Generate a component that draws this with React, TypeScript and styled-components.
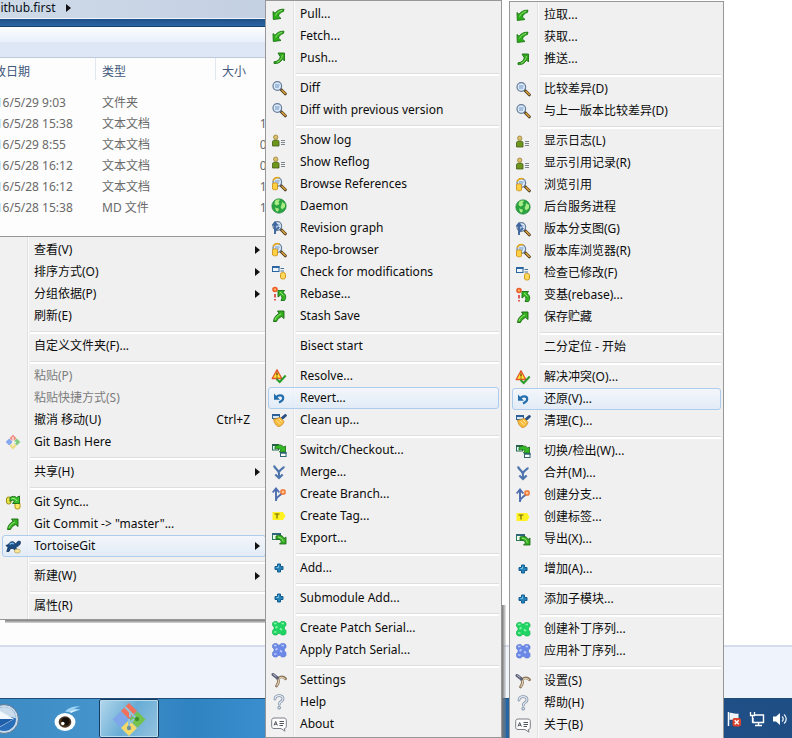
import React from "react";
import styled, { createGlobalStyle, css } from "styled-components";

const GlobalStyle = createGlobalStyle`
  * { box-sizing: border-box; }
  body { margin: 0; background: #fff; }
  body, button, table {
    font-family: "Noto Sans", "Noto Sans CJK SC", sans-serif;
    font-size: 12px;
    line-height: 16px;
  }
`;

const Desktop = styled.main`
  position: relative;
  display: flex;
  flex-direction: column;
  min-height: 100vh;
  max-height: 100vh;
  overflow: hidden;
`;

/* ---------- Explorer window ---------- */

const Explorer = styled.section`
  flex: 1;
  width: 40%;
  margin-left: -18px;
  overflow: hidden;
  background: #fdfdfd;
`;

const AddressBar = styled.nav`
  display: flex;
  align-items: flex-start;
  height: 18px;
  padding-left: 11px;
  background: linear-gradient(90deg, #cfdbe8, #c2cfe2);
`;

const Crumb = styled.button`
  display: flex;
  align-items: center;
  gap: 10px;
  height: 15px;
  padding: 0;
  border: 0;
  background: none;
  color: #0b0f18;
`;

const WindowEdge = styled.div`
  height: 9px;
  border-top: 1px solid #eef4fa;
  border-bottom: 1px solid #17406f;
  background: linear-gradient(#1f5088, #2a66a4);
`;

const CommandBar = styled.div`
  height: 31px;
  border-bottom: 1px solid #bfc9d8;
  background: linear-gradient(#fbfdff 0%, #eaf1fb 48%, #dee6f4 52%, #dde8f6 100%);
`;

const FileTable = styled.table`
  width: 309px;
  table-layout: fixed;
  border-collapse: separate;
  border-spacing: 0;
  color: #6a6a6a;

  tbody::before {
    content: "";
    display: block;
    height: 12px;
  }
`;

const HeadCell = styled.th<{ $width: number }>`
  width: ${(p) => p.$width}px;
  height: 22px;
  padding: 6px 0 0 6px;
  border-right: 1px solid #e2e6ee;
  color: #43587c;
  font-weight: 400;
  text-align: left;
  white-space: nowrap;

  &:first-child { padding-left: 0; }
`;

const Cell = styled.td`
  height: 21px;
  padding: 0 0 0 6px;
  white-space: nowrap;

  &:first-child { padding-left: 0; }
  &:last-child { padding-right: 6px; text-align: right; }
`;

const DetailsPane = styled.aside`
  height: 53px;
  border-top: 2px solid #d6dcec;
  background: #eff3fb;
`;

/* ---------- Taskbar ---------- */

const Taskbar = styled.footer`
  display: flex;
  align-items: stretch;
  justify-content: space-between;
  height: 40px;
  border-top: 1px solid #1f4d78;
  background: linear-gradient(90deg, #3c8bc4 0%, #4593cb 12%, #2f83c1 24%, #3b8fce 34%, #2a70ae 60%, #1e5087 72%, #1f4e85 100%);
`;

const TaskButtons = styled.div`
  display: flex;
  margin-left: -24px;
`;

const TaskButton = styled.button<{ $width: number; $active?: boolean }>`
  display: flex;
  align-items: center;
  justify-content: center;
  width: ${(p) => p.$width}px;
  padding: 0;
  border: 0;
  background: none;
  ${(p) =>
    p.$active &&
    css`
      border: 1px solid #d4e8f5;
      border-radius: 2px;
      outline: 1px solid #153b60;
      outline-offset: -1px;
      box-shadow: inset 0 0 0 1px #b9dbee;
      background: linear-gradient(120deg, #b4d8ec, #68acd5 50%, #94c3e0);
    `}
`;

const Tray = styled.div`
  display: flex;
  align-items: center;
  gap: 7px;
  padding-right: 4px;
`;

const TrayButton = styled.button`
  display: flex;
  padding: 0;
  border: 0;
  background: none;
`;

/* ---------- Context menus ---------- */

const MenuPanel = styled.div<{ $left: number; $top: number; $width: number; $shadow?: "right" | "bottom" }>`
  position: absolute;
  left: ${(p) => p.$left}px;
  top: ${(p) => p.$top}px;
  width: ${(p) => p.$width}px;

  ${(p) =>
    p.$shadow === "bottom" &&
    css`
      &::after {
        content: "";
        position: absolute;
        left: 6px;
        right: 0;
        top: 100%;
        height: 3px;
        background: linear-gradient(#7d7d7d, #d8d8d8);
      }
    `}
  ${(p) =>
    p.$shadow === "right" &&
    css`
      &::after {
        content: "";
        position: absolute;
        left: 100%;
        bottom: 0;
        width: 4px;
        height: 133px;
        background: linear-gradient(90deg, #777, rgba(150, 150, 150, 0.2));
      }
    `}
`;

const MenuList = styled.ul`
  margin: 0;
  padding: 2px;
  list-style: none;
  border: 1px solid #979797;
  background: linear-gradient(90deg, #f1f1f1 27px, #e1e1e1 27px, #e1e1e1 28px, #fcfcfc 28px, #fcfcfc 29px, #f0f0f0 29px);
`;

const MenuButton = styled.button<{ $highlight?: boolean }>`
  display: flex;
  align-items: center;
  width: 100%;
  height: 22px;
  padding: 0 15px 0 2px;
  border: 1px solid transparent;
  border-radius: 3px;
  background: none;
  color: #0c0c0c;
  text-align: left;
  white-space: nowrap;

  &:disabled { color: #7c7c7c; }

  ${(p) =>
    p.$highlight &&
    css`
      border-color: #aeccec;
      background: linear-gradient(rgba(244, 248, 253, 0.8), rgba(222, 234, 248, 0.8));
    `}
`;

const IconSlot = styled.span`
  display: flex;
  flex: none;
  width: 29px;
`;

const Label = styled.span`
  flex: 1;
`;

const SubmenuMark = styled.span`
  display: flex;
  width: 5px;
  margin-right: -10px;
`;

const Separator = styled.li`
  height: 8px;
  padding: 4px 0 0 28px;

  &::before {
    content: "";
    display: block;
    height: 2px;
    border-top: 1px solid #dedede;
    background: #fff;
  }
`;

/* ---------- Icons ---------- */

const Svg = ({ children, size = 16, box = 16 }: { children: React.ReactNode; size?: number; box?: number }) => (
  <svg width={size} height={size} viewBox={`0 0 ${box} ${box}`} aria-hidden="true">
    {children}
  </svg>
);

const Triangle = () => (
  <svg width="5" height="8" viewBox="0 0 5 8" aria-hidden="true">
    <path d="M0 0l5 4-5 4z" fill="#111" />
  </svg>
);

const Lens = () => (
  <>
    <path d="M10 9.500l4.300 4.300" stroke="#4b3a20" strokeWidth="3" strokeLinecap="round" />
    <path d="M11 10.300l3.200 3.200" stroke="#dba23a" strokeWidth="1.600" strokeLinecap="round" />
    <circle cx="6.300" cy="6" r="4.300" fill="#dceafa" stroke="#647c98" strokeWidth="1.200" />
    <path d="M4 5h4.600M4 7h4" stroke="#6f93c4" strokeWidth="1" />
  </>
);

const Patch = ({ fill, light, edge }: { fill: string; light: string; edge: string }) => (
  <Svg>
    <path
      d="M3 1.500h3L7 3h2l1-1.500h3.500L15 3v2.500L13.500 7v2l1.500 1.500v3L13.500 15h-3L9 13.500H7L6 15H3l-1.500-1.500v-3L3 9V7L1.500 5.500V3z"
      fill={fill}
      stroke={edge}
      strokeWidth=".6"
      strokeLinejoin="round"
    />
    <path d="M3 3.500h2.500M10.500 3.500H13M4.500 8l2-1.500M3 12h2.500M9 8.500l2 1.500" stroke={light} strokeWidth="1.600" />
  </Svg>
);

const icons: Record<string, React.ReactNode> = {
  pull: (
    <Svg>
      <path d="M2 5.500l2 1.800C6 4.500 9 3 13 3.200l-.6 2.300C10 6 8.300 7.500 7.400 10L10 12.500 2.300 13.500z" fill="#2fae1c" stroke="#18750f" strokeWidth=".9" strokeLinejoin="round" />
      <path d="M4.600 9.500C6 6.500 8 5 11 4.400" fill="none" stroke="#8fe070" />
    </Svg>
  ),
  push: (
    <Svg>
      <path d="M7 3h6.500v8L11.500 9c-1.500 3-4.500 5-8.500 4.500v-1.700c3.500-.3 5.500-2 6.300-5z" fill="#33a81f" stroke="#1b7312" strokeWidth=".9" strokeLinejoin="round" />
      <path d="M11.500 5c-.5 3.500-2.500 6-5.500 7.300" fill="none" stroke="#8bdc6c" />
    </Svg>
  ),
  commit: (
    <Svg>
      <path d="M6.500 3H13v7.500l-2.300-2C8.500 9.500 6.500 11 5.500 13.500h-3c.3-3.500 2.300-6.500 5.700-8.200z" fill="#35b01f" stroke="#17660f" strokeWidth=".9" strokeLinejoin="round" />
      <path d="M4 12c.7-2.800 2.800-4.800 6-6" fill="none" stroke="#98e878" />
    </Svg>
  ),
  diff: <Svg><Lens /></Svg>,
  browse: (
    <Svg>
      <Lens />
      <path d="M1.500 7.500c1.500-1 4-.8 5 .2v5.500c-1.500 1-4 .8-5-.2z" fill="#ffd044" stroke="#c98a12" strokeWidth=".8" />
      <path d="M2 4.500c1.500-2.500 4-3.500 6.500-2.500" fill="none" stroke="#e8a818" strokeWidth="1.500" />
    </Svg>
  ),
  graph: (
    <Svg>
      <Lens />
      <path d="M4 14V3M1.500 5.500L4 2.500l2.500 3M4 12c0-3 3-3 4-5" fill="none" stroke="#40689f" strokeWidth="1.900" />
    </Svg>
  ),
  log: (
    <Svg>
      <path d="M1.500 14V9.500c0-2 6.500-2 6.500 0V14z" fill="#6e961d" stroke="#435d17" strokeWidth=".8" />
      <circle cx="4.700" cy="5.200" r="2.200" fill="#dcc06c" stroke="#98803c" strokeWidth=".8" />
      <path d="M10 8.500h4M10 10.500h4M10 12.500h4" stroke="#7d868c" />
    </Svg>
  ),
  globe: (
    <Svg>
      <circle cx="8" cy="8" r="7.200" fill="#2aa341" stroke="#1c7f33" strokeWidth=".6" />
      <path d="M4 3c1.500-1.500 4-1.800 5-1.200L7.500 4 8.500 6 5.500 7.500 3.500 6zM11 4l3 2v3l-3 2.500-1.500-2.500 1-2zM4 9.500l4 1.200-1 3-2-1z" fill="#a9ec86" />
    </Svg>
  ),
  modifications: (
    <Svg>
      <rect x="1.500" y="2.500" width="6.500" height="5" fill="#edf5ff" stroke="#2b649e" />
      <path d="M1 3h7.500" stroke="#2b649e" strokeWidth="2" />
      <path d="M9.500 4.500H13M9.500 7H13" stroke="#47739b" />
      <rect x="9.500" y="8.500" width="5" height="6.500" rx="2" fill="#ffd95c" stroke="#d19a1f" />
    </Svg>
  ),
  rebase: (
    <Svg>
      <circle cx="4" cy="3.500" r="2" fill="#ffb15b" stroke="#ea5a2a" strokeWidth="1.600" />
      <path d="M4 8v3.500M4 13v1.500" stroke="#d32a2a" strokeWidth="1.500" />
      <path d="M7 4.500h6.500L12 6.500c3 2 3.500 5 1.500 8H10c1.500-2.500 1.200-4.500-.5-5.500L7 11z" fill="#35b526" stroke="#167113" strokeWidth=".9" />
      <path d="M9 6l3.500 3.500" stroke="#94ea78" />
    </Svg>
  ),
  resolve: (
    <Svg>
      <path d="M6 1.800l4.800 8.700H1.200z" fill="#ffe72f" stroke="#e2542c" strokeWidth="1.300" strokeLinejoin="round" />
      <path d="M6 4.500v3M6 8.500v1" stroke="#6d2f12" strokeWidth="1.300" />
      <path d="M5.500 11l3.200 3 6-6.500" fill="none" stroke="#2b9b29" strokeWidth="2" />
    </Svg>
  ),
  revert: (
    <Svg>
      <path d="M5.500 7c2-2.500 6.500-2.200 6.700.8.100 2-1.500 3.500-4.200 4.700" fill="none" stroke="#236fae" strokeWidth="2.200" />
      <path d="M3 3.500v6.300h6z" fill="#236fae" />
    </Svg>
  ),
  clean: (
    <Svg>
      <rect x="1.500" y="2.500" width="7" height="4" fill="#d6e7f8" stroke="#2e5f96" />
      <path d="M1 3h8" stroke="#2e5f96" strokeWidth="2" />
      <path d="M11.500 6l2.800-2.500" stroke="#294f80" strokeWidth="3" strokeLinecap="round" />
      <path d="M2.500 7c2.500.5 4.500-1.500 7-1.500l3.500 4c-1 3-3 5-6 5-2.500-1.500-4-4-4.500-7.500z" fill="#f7bd3e" stroke="#c98a2c" strokeWidth=".8" />
      <path d="M5.500 8.500l4 3.500M8 7l3 3" stroke="#ffe49a" />
    </Svg>
  ),
  switch: (
    <Svg>
      <rect x="1.500" y="2.500" width="6" height="5.500" fill="#e3f4ff" stroke="#28704e" />
      <path d="M1 3h7" stroke="#28604e" strokeWidth="2" />
      <path d="M4 4.500c3-2.300 7-2 8.500.5L14.500 4v6H8.300L10 8C8.500 6.500 6 6.300 4 7z" fill="#35b825" stroke="#176c13" strokeWidth=".8" />
      <rect x="9.500" y="10.500" width="5.500" height="4" fill="#fff" stroke="#2e6570" />
      <path d="M9 11h6.500" stroke="#2e6570" strokeWidth="1.500" />
    </Svg>
  ),
  merge: (
    <Svg>
      <path d="M3 1.500c.5 3.500 5 4 5 8V13M13 2.500C12.500 5 9 5 8.300 8M4.300 10.500L8 14l3.700-3.500" fill="none" stroke="#4d74ad" strokeWidth="2.100" />
    </Svg>
  ),
  branch: (
    <Svg>
      <path d="M5 15V3M1.700 6.500L5 2.500l3.300 4M5 14c.5-4 4.500-4 6-7" fill="none" stroke="#4d6db0" strokeWidth="1.900" />
      <rect x="10" y="4" width="4" height="4" rx="1" fill="#ffc48b" stroke="#ee7434" strokeWidth="1.500" />
    </Svg>
  ),
  tag: (
    <Svg>
      <path d="M1.500 4H12l2.500 4-2.500 4H1.500z" fill="#fff220" />
      <path d="M3.500 6h5M6 6v4.500" stroke="#6e6a08" strokeWidth="1.200" />
    </Svg>
  ),
  export: (
    <Svg>
      <rect x="1.500" y="3.500" width="8" height="6" fill="#eefbe8" stroke="#2d7a5a" />
      <path d="M1 4h9" stroke="#2d667a" strokeWidth="2" />
      <path d="M5 6c4-1.500 7-.5 8 2.500l2-1.500v7H8.500l2-2C9.500 9.500 7.500 8.800 5 9z" fill="#34ad23" stroke="#176611" strokeWidth=".8" />
      <path d="M7 7.200c3 0 4.500 1.500 5.300 4.500" fill="none" stroke="#9be57d" />
    </Svg>
  ),
  add: (
    <Svg>
      <path d="M6.500 4h3v2.500H12v3H9.500V12h-3V9.500H4v-3h2.500z" fill="#2583b9" stroke="#125c90" strokeLinejoin="round" />
      <path d="M7.500 5.500v2h-2" fill="none" stroke="#79c3e7" />
    </Svg>
  ),
  createPatch: <Patch fill="#1fd463" light="#84f5a8" edge="#12b04b" />,
  applyPatch: <Patch fill="#6b88e6" light="#bccbff" edge="#5d78d0" />,
  settings: (
    <Svg>
      <path d="M7 6.500c2.500-2 5.500-2 7.500.2M6.500 6.500C8.500 9 7 12 5.500 14" fill="none" stroke="#857058" strokeWidth="2.800" strokeLinecap="round" />
      <path d="M7.500 6.800c2.500-1.800 5-1.500 6.500 0M7 7c1.500 2.500 0 5-1.200 6.600" fill="none" stroke="#e0cda8" strokeWidth="1.200" strokeLinecap="round" />
      <path d="M2 2.500L6.500 6" stroke="#5b5f74" strokeWidth="3" strokeLinecap="round" />
      <path d="M2.300 2.500L5 4.500" stroke="#b9bdd0" strokeLinecap="round" />
    </Svg>
  ),
  help: (
    <Svg>
      <path d="M4 5c0-4.500 8.500-4.500 8 0C11.700 7.500 8.300 7.500 8.300 10.200" fill="none" stroke="#8292a8" strokeWidth="2.800" strokeLinecap="round" />
      <path d="M4 5c0-4.500 8.500-4.500 8 0C11.700 7.500 8.300 7.500 8.300 10.200" fill="none" stroke="#e6edf5" strokeWidth="1.200" strokeLinecap="round" />
      <circle cx="8.200" cy="13.700" r="1.400" fill="#d7e1ec" stroke="#8292a8" />
    </Svg>
  ),
  about: (
    <Svg>
      <path d="M3 2h10c1.500 0 2.300 1 2.300 2.300v6c0 1.400-.8 2.200-2 2.200l.7 2.700-4-2.700H3C1.500 12.500.7 11.700.7 10.300v-6C.7 3 1.500 2 3 2z" fill="#fff" stroke="#7a7e86" />
      <path d="M3 9.500l1.700-4 1.700 4M3.700 8.200h2.200M8.500 5.500h4.500M8.500 7.500h4.500M8.500 9.500h3.500" fill="none" stroke="#50565e" />
    </Svg>
  ),
  gitBash: (
    <Svg>
      <path d="M8 .8l3.500 3.500L8 7.800 4.500 4.300z" fill="#ef8b82" />
      <path d="M4.200 4.600l3.500 3.500-3.500 3.500L.7 8.100z" fill="#86a6ef" />
      <path d="M11.800 4.600l3.500 3.500-3.500 3.500-3.500-3.500z" fill="#7fca7e" />
      <path d="M8 8.400l3.500 3.500L8 15.400l-3.500-3.500z" fill="#eedc86" />
      <path d="M8 3v4l3 2M8 8v4" fill="none" stroke="#fff" strokeWidth="1.100" />
    </Svg>
  ),
  sync: (
    <Svg>
      <rect x="1.500" y="3" width="4.500" height="7" rx="2" fill="#e6e04a" stroke="#989014" />
      <rect x="10" y="8" width="5" height="7" rx="2" fill="#ffe96c" stroke="#b09a10" />
      <path d="M5 3.500C7 2 10 2 11.500 3.500L14.500 2v7.500H7.500L9.500 7C8.500 6 6.500 6 5 7.500z" fill="#3bc02c" stroke="#176b12" strokeWidth=".9" />
      <path d="M6.500 4.800c2-.8 4-.3 5.500 2.200" fill="none" stroke="#a6ef88" />
    </Svg>
  ),
  tortoise: (
    <Svg>
      <path d="M1 7.500l2.500-1C5 3 9 2.500 11 6.500c.5-2.500 2-4 4.300-3 .5 2.500-1 4.500-3.500 5l-1 1.500 2 2.500h-2.300L8 10.500 5.500 10.500 4 13.500H1.800l1.200-4z" fill="#1c4d83" stroke="#0d2c57" strokeWidth=".8" strokeLinejoin="round" />
      <path d="M4.800 6.500c1-1.500 2.800-1.800 4.200-.5" stroke="#6ab1e5" fill="none" strokeWidth="1.500" />
      <ellipse cx="12.300" cy="13" rx="3" ry="2" fill="#fbe79a" stroke="#b09d59" strokeWidth=".7" />
    </Svg>
  ),
};

const PlayerIcon = () => (
  <Svg size={32} box={32}>
    <circle cx="16" cy="16" r="14.500" fill="#c7d9ea" stroke="#5f7891" />
    <circle cx="16" cy="16" r="12" fill="#2a6db8" />
    <path d="M4 15.500C5 7 11 4 16 4c6.500 0 11.500 4.500 12 11.500-8-3-16-3-24 0z" fill="#cadcec" />
    <path d="M11 7.500L26 16l-15 8.500z" fill="#f2f8fd" />
    <path d="M12 16h13.500L12 23.500z" fill="#1f5ea8" />
  </Svg>
);

const EyeIcon = () => (
  <Svg size={32} box={32}>
    <path d="M15 8.500c4-4.500 9-5 15-5.500l-6 3 7 .5-10 3z" fill="#9cd3f5" />
    <path d="M20 8.500l9-2.500-8 4z" fill="#dff2fd" />
    <ellipse cx="15" cy="19" rx="10.500" ry="9" fill="#fbfdff" />
    <ellipse cx="15" cy="19" rx="6.300" ry="5.800" fill="#49351f" />
    <circle cx="15.500" cy="18.500" r="4" fill="#160f0b" />
    <circle cx="12.800" cy="20.500" r="1.800" fill="#fff" />
  </Svg>
);

const GitTaskIcon = () => (
  <Svg size={34} box={34}>
    <path d="M17 1l8 8-8 8-8-8z" fill="#f0705c" />
    <path d="M8.500 9.500l8 8-8 8-8-8z" fill="#7ea6ea" />
    <path d="M25.500 9.500l8 8-8 8-8-8z" fill="#72c24d" />
    <path d="M17 18l8 8-8 8-8-8z" fill="#f4da6c" />
    <path d="M13 5l5 5v5M18 10l6 6M17 17v9M22 17l-4 4" fill="none" stroke="#93c3d9" strokeWidth="2" />
    <circle cx="17" cy="26" r="2.200" fill="#6d90a0" />
    <circle cx="25" cy="17" r="2.200" fill="#3d8f2e" />
  </Svg>
);

const FlagIcon = () => (
  <Svg>
    <path d="M2.500 1v14" stroke="#fff" strokeWidth="1.500" />
    <path d="M3.500 2c3-1 4 1.500 9 .5V9c-4 1-6-1-9 0z" fill="#eef3f8" />
    <rect x="6.500" y="7" width="8.500" height="8.500" rx="2" fill="#d9432e" />
    <path d="M8.700 9.200l4 4M12.700 9.200l-4 4" stroke="#fff" strokeWidth="1.500" />
  </Svg>
);

const NetworkIcon = () => (
  <Svg>
    <path d="M6 4h8.500v7.500H4V7M6 14.500h7M9.500 12v2" fill="none" stroke="#fff" strokeWidth="1.400" />
    <path d="M1.500 1v3.500h4V1M3.500 5v6.500" fill="none" stroke="#fff" strokeWidth="1.300" />
  </Svg>
);

const VolumeIcon = () => (
  <Svg>
    <path d="M1 5.500h3L8 2v12l-4-3.500H1z" fill="#fff" />
    <path d="M10 5.500c1.500 1.500 1.500 3.500 0 5M12 3.500c3 2.500 3 6.500 0 9" fill="none" stroke="#e4edf6" strokeWidth="1.300" />
  </Svg>
);

/* ---------- Data ---------- */

type Item = {
  label: string;
  icon?: string;
  submenu?: boolean;
  shortcut?: string;
  disabled?: boolean;
  highlight?: boolean;
};

const files = [
  ["2016/5/29 9:03", "文件夹", ""],
  ["2016/5/28 15:38", "文本文档", "1 KB"],
  ["2016/5/29 8:55", "文本文档", "0 KB"],
  ["2016/5/28 16:12", "文本文档", "0 KB"],
  ["2016/5/28 16:12", "文本文档", "1 KB"],
  ["2016/5/28 15:38", "MD 文件", "1 KB"],
];

const folderMenu: Item[][] = [
  [
    { label: "查看(V)", submenu: true },
    { label: "排序方式(O)", submenu: true },
    { label: "分组依据(P)", submenu: true },
    { label: "刷新(E)" },
  ],
  [{ label: "自定义文件夹(F)..." }],
  [
    { label: "粘贴(P)", disabled: true },
    { label: "粘贴快捷方式(S)", disabled: true },
    { label: "撤消 移动(U)", shortcut: "Ctrl+Z" },
    { label: "Git Bash Here", icon: "gitBash" },
  ],
  [{ label: "共享(H)", submenu: true }],
  [
    { label: "Git Sync...", icon: "sync" },
    { label: 'Git Commit -> "master"...', icon: "commit" },
    { label: "TortoiseGit", icon: "tortoise", submenu: true, highlight: true },
  ],
  [{ label: "新建(W)", submenu: true }],
  [{ label: "属性(R)" }],
];

const gitGroups: [icon: string, english: string, chinese: string][][] = [
  [
    ["pull", "Pull...", "拉取..."],
    ["pull", "Fetch...", "获取..."],
    ["push", "Push...", "推送..."],
  ],
  [
    ["diff", "Diff", "比较差异(D)"],
    ["diff", "Diff with previous version", "与上一版本比较差异(D)"],
  ],
  [
    ["log", "Show log", "显示日志(L)"],
    ["log", "Show Reflog", "显示引用记录(R)"],
    ["browse", "Browse References", "浏览引用"],
    ["globe", "Daemon", "后台服务进程"],
    ["graph", "Revision graph", "版本分支图(G)"],
    ["browse", "Repo-browser", "版本库浏览器(R)"],
    ["modifications", "Check for modifications", "检查已修改(F)"],
    ["rebase", "Rebase...", "变基(rebase)..."],
    ["commit", "Stash Save", "保存贮藏"],
  ],
  [["", "Bisect start", "二分定位 - 开始"]],
  [
    ["resolve", "Resolve...", "解决冲突(O)..."],
    ["revert", "Revert...", "还原(V)..."],
    ["clean", "Clean up...", "清理(C)..."],
  ],
  [
    ["switch", "Switch/Checkout...", "切换/检出(W)..."],
    ["merge", "Merge...", "合并(M)..."],
    ["branch", "Create Branch...", "创建分支..."],
    ["tag", "Create Tag...", "创建标签..."],
    ["export", "Export...", "导出(X)..."],
  ],
  [["add", "Add...", "增加(A)..."]],
  [["add", "Submodule Add...", "添加子模块..."]],
  [
    ["createPatch", "Create Patch Serial...", "创建补丁序列..."],
    ["applyPatch", "Apply Patch Serial...", "应用补丁序列..."],
  ],
  [
    ["settings", "Settings", "设置(S)"],
    ["help", "Help", "帮助(H)"],
    ["about", "About", "关于(B)"],
  ],
];

const gitMenu = (language: "english" | "chinese"): Item[][] =>
  gitGroups.map((group) =>
    group.map(([icon, english, chinese]) => ({
      icon,
      label: language === "english" ? english : chinese,
      highlight: icon === "revert",
    })),
  );

type MenuProps = { groups: Item[][]; name: string; left: number; top: number; width: number; shadow?: "right" | "bottom" };

function ContextMenu({ groups, name, left, top, width, shadow }: MenuProps) {
  return (
    <MenuPanel $left={left} $top={top} $width={width} $shadow={shadow}>
      <MenuList role="menu" aria-label={name}>
        {groups.map((group, index) => (
          <React.Fragment key={index}>
            {index > 0 && <Separator role="separator" />}
            {group.map((item) => (
              <li key={item.label} role="none">
                <MenuButton
                  type="button"
                  role="menuitem"
                  disabled={item.disabled}
                  aria-haspopup={item.submenu ? "menu" : undefined}
                  $highlight={item.highlight}
                >
                  <IconSlot>{item.icon ? icons[item.icon] : null}</IconSlot>
                  <Label>{item.label}</Label>
                  {item.shortcut && <span>{item.shortcut}</span>}
                  {item.submenu && <SubmenuMark><Triangle /></SubmenuMark>}
                </MenuButton>
              </li>
            ))}
          </React.Fragment>
        ))}
      </MenuList>
    </MenuPanel>
  );
}

export default function App() {
  return (
    <Desktop>
      <GlobalStyle />
      <Explorer>
        <AddressBar>
          <Crumb type="button">github.first <Triangle /></Crumb>
        </AddressBar>
        <WindowEdge />
        <CommandBar />
        <FileTable>
          <thead>
            <tr>
              <HeadCell $width={114}>修改日期</HeadCell>
              <HeadCell $width={120}>类型</HeadCell>
              <HeadCell $width={75}>大小</HeadCell>
            </tr>
          </thead>
          <tbody>
            {files.map(([date, type, size], index) => (
              <tr key={index}>
                <Cell>{date}</Cell>
                <Cell>{type}</Cell>
                <Cell>{size}</Cell>
              </tr>
            ))}
          </tbody>
        </FileTable>
      </Explorer>
      <DetailsPane />
      <Taskbar>
        <TaskButtons>
          <TaskButton type="button" $width={56} aria-label="Media player"><PlayerIcon /></TaskButton>
          <TaskButton type="button" $width={67} aria-label="Viewer"><EyeIcon /></TaskButton>
          <TaskButton type="button" $width={60} $active aria-label="Git"><GitTaskIcon /></TaskButton>
        </TaskButtons>
        <Tray>
          <TrayButton type="button" aria-label="Action center"><FlagIcon /></TrayButton>
          <TrayButton type="button" aria-label="Network"><NetworkIcon /></TrayButton>
          <TrayButton type="button" aria-label="Volume"><VolumeIcon /></TrayButton>
        </Tray>
      </Taskbar>
      <ContextMenu name="Folder" groups={folderMenu} left={-1} top={236} width={270} shadow="bottom" />
      <ContextMenu name="TortoiseGit" groups={gitMenu("english")} left={265} top={0} width={237} shadow="right" />
      <ContextMenu name="TortoiseGit 中文" groups={gitMenu("chinese")} left={509} top={1} width={215} />
    </Desktop>
  );
}
